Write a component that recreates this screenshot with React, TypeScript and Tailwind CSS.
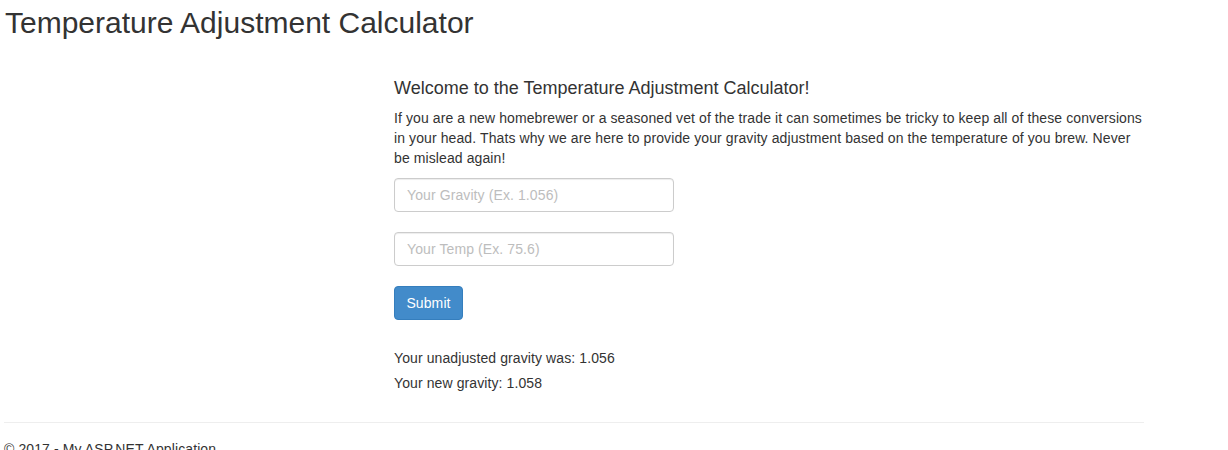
export default function App() {
  return (
    <div
      className="min-h-[450px] bg-white text-[14px] leading-[20px] text-[#333]"
      style={{ fontFamily: '"Liberation Sans", Arial, Helvetica, sans-serif' }}
    >
      <div className="w-[1144px] pl-[4px] pt-[6px]">
        <h2 className="text-[30px] leading-[33px] font-normal text-[#333] pl-[1px]">
          Temperature Adjustment Calculator
        </h2>
        <div className="ml-[390px] w-[750px] mt-[39px] tracking-[0.1px]">
          <h4 className="text-[18px] leading-[20px] font-normal mb-[10px] tracking-normal">
            Welcome to the Temperature Adjustment Calculator!
          </h4>
          <p className="mb-[10px]">
            If you are a new homebrewer or a seasoned vet of the trade it can sometimes be tricky to keep all of these
            conversions in your head. Thats why we are here to provide your gravity adjustment based on the temperature
            of you brew. Never be mislead again!
          </p>
          <div className="flex flex-col gap-[20px]">
            <input
              type="text"
              placeholder="Your Gravity (Ex. 1.056)"
              className="block w-[280px] h-[34px] px-[12px] py-[6px] border border-[#ccc] rounded-[4px] text-[14px] text-[#555] placeholder:text-[#bdbdbd] shadow-[inset_0_1px_1px_rgba(0,0,0,0.075)] outline-none"
            />
            <input
              type="text"
              placeholder="Your Temp (Ex. 75.6)"
              className="block w-[280px] h-[34px] px-[12px] py-[6px] border border-[#ccc] rounded-[4px] text-[14px] text-[#555] placeholder:text-[#bdbdbd] shadow-[inset_0_1px_1px_rgba(0,0,0,0.075)] outline-none"
            />
            <div>
              <button className="h-[34px] w-[69px] border border-[#357ebd] bg-[#428bca] text-white rounded-[4px] text-[14px] leading-[20px]">
                Submit
              </button>
            </div>
          </div>
          <div className="mt-[28px] flex flex-col gap-[5px]">
            <div>Your unadjusted gravity was: 1.056</div>
            <div>Your new gravity: 1.058</div>
          </div>
        </div>
        <hr className="mt-[29px] border-0 border-t border-[#eee]" />
        <footer className="mt-[16px] tracking-[0.1px]">
          <p>© 2017 - My ASP.NET Application</p>
        </footer>
      </div>
    </div>
  );
}
